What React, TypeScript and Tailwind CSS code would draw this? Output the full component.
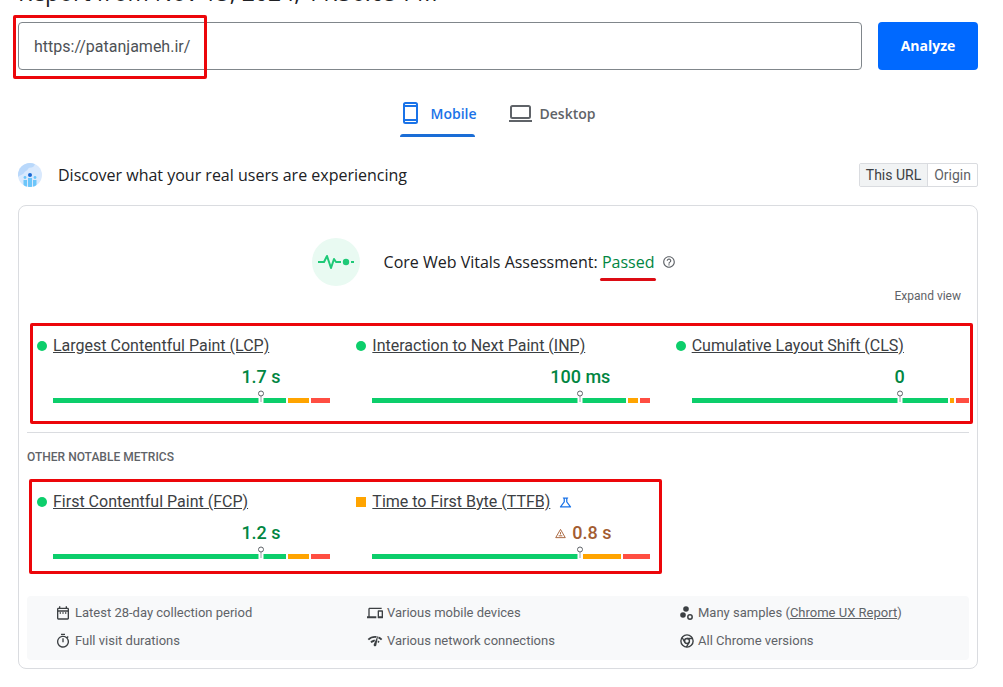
import type { ReactNode } from "react";
import {
  MdOutlineDateRange,
  MdOutlineTimer,
  MdOutlineDevices,
  MdNetworkCheck,
  MdHelpOutline,
  MdOutlineScience,
} from "react-icons/md";

interface Metric {
  name: string;
  value: string;
  rating: "good" | "average";
  experimental?: boolean;
  // relative share of good / needs improvement / poor page loads
  shares: [number, number, number];
}

const coreMetrics: Metric[] = [
  { name: "Largest Contentful Paint (LCP)", value: "1.7 s", rating: "good", shares: [233, 21, 19] },
  { name: "Interaction to Next Paint (INP)", value: "100 ms", rating: "good", shares: [254, 10, 10] },
  { name: "Cumulative Layout Shift (CLS)", value: "0", rating: "good", shares: [256, 4, 13] },
];

const otherMetrics: Metric[] = [
  { name: "First Contentful Paint (FCP)", value: "1.2 s", rating: "good", shares: [233, 21, 19] },
  {
    name: "Time to First Byte (TTFB)",
    value: "0.8 s",
    rating: "average",
    experimental: true,
    shares: [208, 38, 27],
  },
];

export default function App() {
  return (
    <main className="overflow-hidden bg-white pl-[18px] pr-[25px] pb-4 font-['Roboto',sans-serif] text-[#3c4043]">
      <h1 className="-mt-[22px] h-11 whitespace-nowrap font-['Open_Sans',sans-serif] text-[23px] leading-7 text-[#202124]">
        Report from Nov 15, 2024, 11:36:05 PM
      </h1>

      <form className="flex gap-4" onSubmit={(e) => e.preventDefault()}>
        <div className="relative grow">
          <input
            type="url"
            aria-label="Enter a web page URL"
            defaultValue="https://patanjameh.ir/"
            className="h-12 w-full rounded border border-[#80868b] px-[15px] text-base text-[#4d5156] outline-none"
          />
          <div className="pointer-events-none absolute -left-[5px] -top-[7px] h-16 w-[194px] rounded-xs border-3 border-[#ec060a]" />
        </div>
        <button
          type="submit"
          className="h-12 w-25 rounded bg-[#0069ff] font-['Open_Sans',sans-serif] text-sm font-bold text-white"
        >
          Analyze
        </button>
      </form>

      <div role="tablist" className="mt-5 flex justify-center gap-8 font-['Open_Sans',sans-serif] text-sm font-semibold">
        <button
          role="tab"
          aria-selected="true"
          className="relative flex h-[47px] items-center gap-2 text-[#1a73e8]"
        >
          <PhoneIcon />
          Mobile
          <span className="absolute bottom-0 left-0 right-0.5 h-[3px] rounded-t-full bg-[#1a6dd6]" />
        </button>
        <button role="tab" aria-selected="false" className="flex h-[47px] items-center gap-2 text-[#5f6368]">
          <LaptopIcon />
          Desktop
        </button>
      </div>

      <div className="mt-[26px] flex items-center">
        <UsersIcon />
        <h2 className="ml-4 grow font-['Open_Sans',sans-serif] text-base text-[#202124]">
          Discover what your real users are experiencing
        </h2>
        <div className="flex h-6 rounded-xs border border-[#dadce0] text-sm">
          <button className="border-r border-[#dadce0] bg-[#f1f3f4] px-1.5 text-[#3c4043]">This URL</button>
          <button className="px-1.5 text-[#5f6368]">Origin</button>
        </div>
      </div>

      <section className="mt-[18px] rounded-lg border border-[#dadce0] px-2 pb-2 pt-8">
        <div className="flex items-center justify-center pr-2">
          <PulseIcon />
          <h3 className="ml-6 font-['Open_Sans',sans-serif] text-base font-medium text-[#202124]">
            Core Web Vitals Assessment:{" "}
            <span className="relative text-[#018642]">
              Passed
              <span className="absolute -inset-x-0.5 -bottom-2 h-[3px] rounded-full bg-[#dc0c14]" />
            </span>
          </h3>
          <button aria-label="About this assessment" className="ml-2 text-[#5f6368]">
            <MdHelpOutline size={14} />
          </button>
        </div>
        <div className="flex h-5 justify-end pr-2">
          <button className="text-xs text-[#5f6368]">Expand view</button>
        </div>

        <div className="relative mt-[17px] grid grid-cols-3 gap-4 pb-[29px] pt-[13px]">
          {coreMetrics.map((metric) => (
            <MetricGauge key={metric.name} metric={metric} />
          ))}
          <div className="pointer-events-none absolute -right-1 left-[3px] top-0 h-[101px] rounded-xs border-3 border-[#ec060a]" />
        </div>

        <h4 className="border-t border-[#dadce0] pt-4 text-xs font-medium leading-4 text-[#5f6368]">
          OTHER NOTABLE METRICS
        </h4>

        <div className="relative mt-[14px] grid grid-cols-3 gap-4 pb-[37px] pt-[13px]">
          {otherMetrics.map((metric) => (
            <MetricGauge key={metric.name} metric={metric} />
          ))}
          <div className="pointer-events-none absolute left-0.5 top-0 h-[95px] w-[633px] rounded-xs border-3 border-[#ec060a]" />
        </div>

        <div className="grid grid-cols-[312fr_313fr_289fr] gap-y-2 rounded bg-[#f8f9fa] pb-[9px] pl-7 pt-[7px] text-[13px] text-[#5f6368]">
          <Note icon={<MdOutlineDateRange size={16} />}>Latest 28-day collection period</Note>
          <Note icon={<MdOutlineDevices size={16} />}>Various mobile devices</Note>
          <Note icon={<SamplesIcon />}>
            Many samples (
            <a href="#crux" className="underline">
              Chrome UX Report
            </a>
            )
          </Note>
          <Note icon={<MdOutlineTimer size={16} />}>Full visit durations</Note>
          <Note icon={<MdNetworkCheck size={16} />}>Various network connections</Note>
          <Note icon={<ChromeIcon />}>All Chrome versions</Note>
        </div>
      </section>
    </main>
  );
}

function MetricGauge({ metric }: { metric: Metric }) {
  const isGood = metric.rating === "good";
  const [good, average, poor] = metric.shares;

  return (
    <div className="pl-[26px]">
      <div className="-ml-4 flex items-center text-base leading-5">
        <span className={`mr-1.5 size-2.5 shrink-0 ${isGood ? "rounded-full bg-[#0cce6b]" : "bg-[#ffa400]"}`} />
        <a href="#metric" className="whitespace-nowrap underline">
          {metric.name}
        </a>
        {metric.experimental && <MdOutlineScience size={15} className="ml-2 text-[#1a73e8]" />}
      </div>

      {/* Value sits over the 75th percentile pin */}
      <div
        className={`mt-[11px] flex items-center justify-center pl-[50%] text-lg font-medium leading-5 ${
          isGood ? "text-[#018642]" : "text-[#a35c31]"
        }`}
      >
        {!isGood && <TriangleIcon />}
        {metric.value}
      </div>

      <div className="relative mt-[11px] flex h-[5px] gap-0.5">
        <div className="bg-[#0cce6b]" style={{ flex: good }} />
        <div className="bg-[#ffa400]" style={{ flex: average }} />
        <div className="bg-[#ff4e42]" style={{ flex: poor }} />
        <svg viewBox="0 0 7 13" className="absolute -top-2 left-3/4 h-[13px] w-[7px] -translate-x-1/2">
          <path d="M1 8h5v5H1z" fill="#fff" />
          <path d="M3.5 6v6" stroke="#9aa0a6" />
          <circle cx="3.5" cy="3.5" r="2.5" fill="#fff" stroke="#5f6368" />
        </svg>
      </div>
    </div>
  );
}

function Note({ icon, children }: { icon: ReactNode; children: ReactNode }) {
  return (
    <div className="flex items-center gap-1">
      <span className="shrink-0 text-[#3c4043]">{icon}</span>
      <span className="leading-5">{children}</span>
    </div>
  );
}

function PhoneIcon() {
  return (
    <svg width="22" height="24" viewBox="0 0 22 24" fill="none" stroke="currentColor" strokeWidth="2">
      <rect x="4" y="1" width="13" height="20" rx="1.5" />
      <path d="M4 4h13M4 18h13" />
    </svg>
  );
}

function LaptopIcon() {
  return (
    <svg width="23" height="24" viewBox="0 0 23 24" fill="none" stroke="currentColor" strokeWidth="2">
      <rect x="2" y="4" width="19" height="12" rx="1.5" />
      <path d="M0 19h23" />
    </svg>
  );
}

function UsersIcon() {
  return (
    <svg width="24" height="24" viewBox="0 0 24 24" className="shrink-0">
      <clipPath id="users-disc">
        <circle cx="12" cy="12" r="12" />
      </clipPath>
      <g clipPath="url(#users-disc)">
        <path d="M0 0h24v24H0z" fill="#d9e9fd" />
        <path d="M0 0h18c-2 1-1 3-3 4s-4 0-5 2-3 2-4 4-3 1-6 4z" fill="#b9d8fb" />
        <g fill="#6cc6fa">
          <path d="M10 15h4v9h-4zM5.5 17H9v7H5.5zM15 17h3.5v7H15z" />
          <circle cx="7" cy="14.5" r="1.4" />
          <circle cx="17" cy="14.5" r="1.4" />
        </g>
        <circle cx="12" cy="12" r="2" fill="#1967d2" />
      </g>
    </svg>
  );
}

function PulseIcon() {
  return (
    <svg width="48" height="48" viewBox="0 0 48 48" className="shrink-0">
      <circle cx="24" cy="24" r="24" fill="#e9faf2" />
      <path
        d="M6 24h6l3-6 4 12 3-9 2 3h5M39 24h3"
        fill="none"
        stroke="#1ec977"
        strokeWidth="2"
        strokeLinejoin="round"
      />
      <circle cx="34" cy="24" r="3.2" fill="#1ec977" />
    </svg>
  );
}

function TriangleIcon() {
  return (
    <svg
      width="11"
      height="11"
      viewBox="0 0 12 12"
      className="ml-1.5 mr-1.5 shrink-0"
      fill="none"
      stroke="currentColor"
    >
      <path d="M6 1.5 11.2 10.5H.8zM6 4.5v2.500M4 8.500h4" />
    </svg>
  );
}

function SamplesIcon() {
  return (
    <svg width="14" height="16" viewBox="0 0 14 16" fill="currentColor">
      <circle cx="6" cy="4" r="2.8" />
      <circle cx="3" cy="10" r="2.8" />
      <circle cx="10" cy="12" r="2.2" fill="none" stroke="currentColor" strokeWidth="1.5" />
    </svg>
  );
}

function ChromeIcon() {
  return (
    <svg width="14" height="16" viewBox="0 0 16 16" fill="none" stroke="currentColor" strokeWidth="1.6">
      <circle cx="8" cy="8" r="7" />
      <circle cx="8" cy="8" r="2.8" />
      <path d="M8 5.2h6.3M5.5 9.4 2.4 4M10.5 9.4 7.3 15" />
    </svg>
  );
}
